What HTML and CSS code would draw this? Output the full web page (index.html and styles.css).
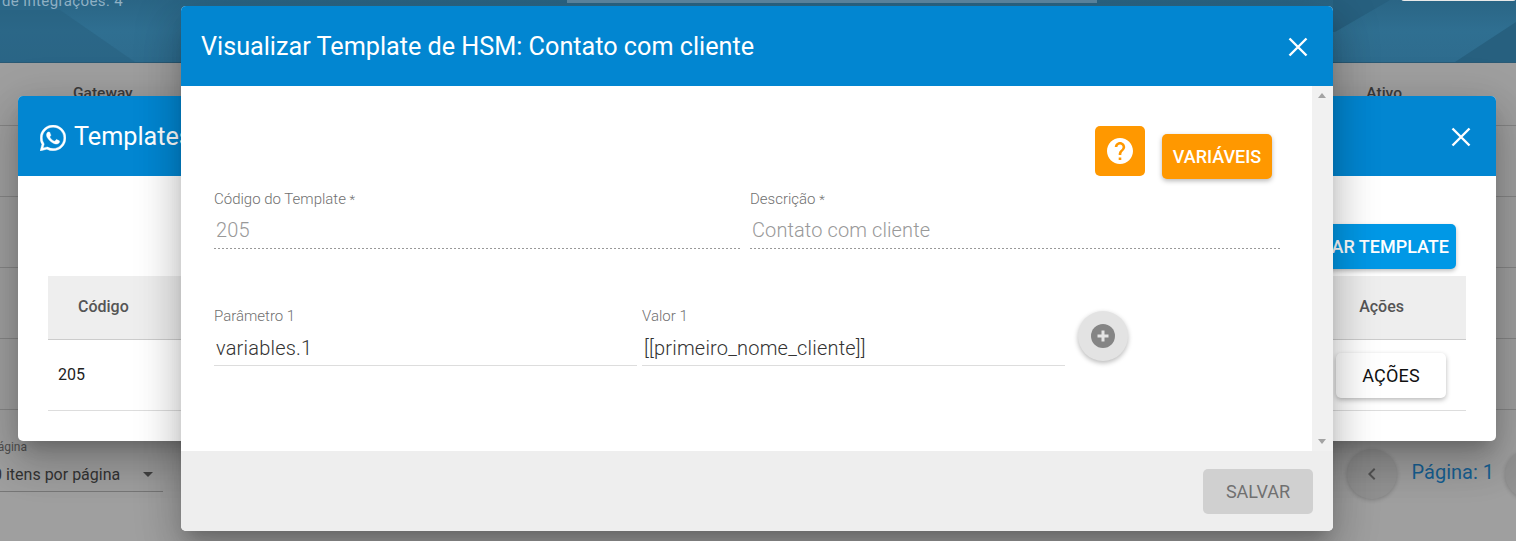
FILE: index.html
```html
<!DOCTYPE html>
<html lang="pt-BR">
<head>
<meta charset="utf-8">
<title>Visualizar Template de HSM</title>
<link rel="stylesheet" href="styles.css">
</head>
<body>
<div class="page">
  <header class="hero">
    <svg class="hero-art" width="1516" height="62" viewBox="0 0 1516 62">
      <path d="M60 10 L135 62 H0 V10 Z" fill="#28607f" opacity=".55"/>
      <path d="M1335 32 L1390 0 H1333 V32 Z" fill="#27607f"/>
      <path d="M1455 62 L1516 22 V62 Z" fill="#27607f"/>
    </svg>
    <span class="hero-count">de integrações: 4</span>
    <span class="hero-search"></span>
    <span class="hero-btn"></span>
  </header>
  <div class="bg-table">
    <div class="bg-head"><span>Gateway</span><span>Ativo</span></div>
    <div class="bg-row"></div>
    <div class="bg-row"></div>
    <div class="bg-row"></div>
    <div class="bg-row"></div>
  </div>
  <div class="bg-footer">
    <div class="per-page">
      <span class="per-label">Itens por página</span>
      <div class="per-select"><span>10 itens por página</span><i class="caret"></i></div>
    </div>
    <div class="pager">
      <span class="pager-btn"><svg width="24" height="24" viewBox="0 0 24 24"><path d="M15.4 7.4 14 6l-6 6 6 6 1.4-1.4L10.8 12z" fill="#555"/></svg></span>
      <span class="pager-text">Página: 1</span>
      <span class="pager-btn"></span>
    </div>
  </div>
</div>

<section class="modal modal-back">
  <div class="modal-head">
    <h2 class="modal-title">
      <svg class="wa" width="26" height="26" viewBox="0 0 24 24"><path fill="#fff" stroke="#fff" stroke-width=".35" d="M17.472 14.382c-.297-.149-1.758-.867-2.03-.967-.273-.099-.471-.148-.67.15-.197.297-.767.966-.94 1.164-.173.199-.347.223-.644.075-.297-.15-1.255-.463-2.39-1.475-.883-.788-1.48-1.761-1.653-2.059-.173-.297-.018-.458.13-.606.134-.133.298-.347.446-.52.149-.174.198-.298.298-.497.099-.198.05-.371-.025-.52-.075-.149-.669-1.612-.916-2.207-.242-.579-.487-.5-.669-.51-.173-.008-.371-.01-.57-.01-.198 0-.52.074-.792.372-.272.297-1.04 1.016-1.04 2.479 0 1.462 1.065 2.875 1.213 3.074.149.198 2.096 3.2 5.077 4.487.709.306 1.262.489 1.694.625.712.227 1.36.195 1.871.118.571-.085 1.758-.719 2.006-1.413.248-.694.248-1.289.173-1.413-.074-.124-.272-.198-.57-.347m-5.421 7.403h-.004a9.87 9.87 0 01-5.031-1.378l-.361-.214-3.741.982.998-3.648-.235-.374a9.86 9.86 0 01-1.51-5.26c.001-5.45 4.436-9.884 9.888-9.884 2.64 0 5.122 1.03 6.988 2.898a9.825 9.825 0 012.893 6.994c-.003 5.45-4.437 9.884-9.885 9.884m8.413-18.297A11.815 11.815 0 0012.05 0C5.495 0 .16 5.335.157 11.892c0 2.096.547 4.142 1.588 5.945L.057 24l6.305-1.654a11.882 11.882 0 005.683 1.448h.005c6.554 0 11.89-5.335 11.893-11.893a11.821 11.821 0 00-3.48-8.413z"/></svg>
      <span class="title-text">Templates de HSM</span>
    </h2>
    <button class="close" type="button" aria-label="Fechar"><svg width="20" height="20" viewBox="0 0 20 20"><path d="M1.500 1.500l17 17M18.500 1.500l-17 17" stroke="#fff" stroke-width="2.400" fill="none"/></svg></button>
  </div>
  <div class="back-body">
    <div class="back-actions"><button class="btn btn-blue" type="button">ADICIONAR TEMPLATE</button></div>
    <div class="tbl-head"><span class="col-code">Código</span><span class="col-act">Ações</span></div>
    <div class="tbl-row"><span class="col-value">205</span><button class="btn btn-white" type="button">AÇÕES</button></div>
  </div>
</section>

<section class="modal modal-front">
  <div class="modal-head">
    <h2 class="modal-title"><span class="title-text">Visualizar Template de HSM: Contato com cliente</span></h2>
    <button class="close" type="button" aria-label="Fechar"><svg width="20" height="20" viewBox="0 0 20 20"><path d="M1.500 1.500l17 17M18.500 1.500l-17 17" stroke="#fff" stroke-width="2.400" fill="none"/></svg></button>
  </div>
  <div class="front-body">
    <div class="front-scroll">
      <div class="tools">
        <button class="help" type="button" aria-label="Ajuda">
          <svg width="26" height="26" viewBox="2 2 20 20"><path fill="#fff" d="M12 2C6.480 2 2 6.480 2 12s4.480 10 10 10 10-4.480 10-10S17.520 2 12 2zm1 17h-2v-2h2v2zm2.070-7.750l-.9.920C13.450 12.900 13 13.500 13 15h-2v-.5c0-1.100.45-2.100 1.170-2.830l1.240-1.260c.37-.36.59-.86.59-1.410 0-1.100-.9-2-2-2s-2 .9-2 2H8c0-2.210 1.790-4 4-4s4 1.790 4 4c0 .88-.36 1.680-.93 2.250z"/></svg>
        </button>
        <button class="btn btn-orange" type="button">VARIÁVEIS</button>
      </div>
      <div class="row-disabled">
        <label class="field field-code"><span class="lbl">Código do Template <span class="req">*</span></span><span class="val val-off">205</span></label>
        <label class="field field-desc"><span class="lbl">Descrição <span class="req">*</span></span><span class="val val-off">Contato com cliente</span></label>
      </div>
      <div class="row-params">
        <label class="field field-param"><span class="lbl">Parâmetro 1</span><span class="val">variables.1</span></label>
        <label class="field field-param"><span class="lbl">Valor 1</span><span class="val">[[primeiro_nome_cliente]]</span></label>
        <button class="add" type="button" aria-label="Adicionar">
          <svg width="24" height="24" viewBox="0 0 24 24"><circle cx="12" cy="12" r="12" fill="#858585"/><path d="M12 6.500v11M6.500 12h11" stroke="#e4e4e4" stroke-width="3"/></svg>
        </button>
      </div>
    </div>
    <div class="scrollbar"><i class="arrow-up"></i><i class="arrow-down"></i></div>
  </div>
  <div class="front-foot"><button class="btn btn-off" type="button">SALVAR</button></div>
</section>
</body>
</html>
```
FILE: styles.css
```css
* { box-sizing: border-box; }
html, body { margin: 0; height: 541px; overflow: hidden; }
body { font-family: Roboto, "Liberation Sans", sans-serif; background: #9b9b9b; color: #222; position: relative; }
button { font-family: inherit; border: 0; }

.page { height: 541px; display: flex; flex-direction: column; background: #9f9f9f; }
.hero { position: relative; height: 63px; flex: none; overflow: hidden; background: linear-gradient(180deg, #2a6585 0%, #2f6f91 50%, #2e6c8e 100%); border-bottom: 1px solid #2a5a75; }
.hero-art { position: absolute; left: 0; top: 0; }
.hero-count { position: absolute; left: 2px; top: -7px; font-size: 15px; line-height: 17px; color: #8fb0c4; letter-spacing: .4px; }
.hero-search { position: absolute; left: 567px; top: 0; width: 530px; height: 3px; background: #5e8aa5; }
.hero-btn { position: absolute; left: 1401px; top: -3px; width: 115px; height: 4px; background: #e9e9e9; border-radius: 0 0 3px 3px; }

.bg-table { flex: none; }
.bg-head { height: 63px; display: flex; justify-content: space-between; padding: 21px 114px 0 73px; font-size: 15.5px; font-weight: 500; color: #3a3a3a; border-bottom: 1px solid #858585; }
.bg-row { height: 71px; border-bottom: 1px solid #858585; }
.bg-footer { flex: 1; position: relative; display: flex; justify-content: space-between; }
.per-page { width: 163px; margin-top: 30px; overflow: hidden; border-bottom: 1px solid #777; height: 52px; }
.per-label { display: block; margin-left: -79px; font-size: 12px; line-height: 14px; color: #4f4f4f; text-align: right; width: 106px; white-space: nowrap; }
.per-select { display: flex; align-items: center; justify-content: space-between; margin: 11px 10px 0 -16px; font-size: 16px; color: #333; }
.caret { width: 0; height: 0; border: 5px solid transparent; border-top: 5px solid #444; border-bottom: 0; }
.pager { display: flex; align-items: flex-start; padding-top: 39px; margin-right: -39px; }
.pager-btn { width: 50px; height: 50px; border-radius: 50%; background: #929292; box-shadow: 0 1px 4px rgba(0,0,0,.2); display: flex; align-items: center; justify-content: center; }
.pager-text { font-size: 20px; line-height: 24px; margin: 11px 11px 0 15px; color: #175f92; white-space: nowrap; }

.modal { position: absolute; overflow: hidden; border-radius: 5px; background: #fff; box-shadow: 0 11px 15px -7px rgba(0,0,0,.2), 0 24px 38px 3px rgba(0,0,0,.14), 0 9px 46px 8px rgba(0,0,0,.12); display: flex; flex-direction: column; }
.modal-back { left: 18px; top: 96px; width: 1478px; height: 345px; }
.modal-front { left: 181px; top: 6px; width: 1152px; height: 525px; }
.modal-head { height: 80px; flex: none; background: #0286d1; display: flex; align-items: center; justify-content: space-between; padding: 0 22px 0 20px; color: #fff; }
.modal-back .modal-head { padding-left: 22px; }
.modal-title { margin: 0; display: flex; align-items: center; gap: 8px; font-size: 25.2px; font-weight: 400; line-height: 28px; white-space: nowrap; }
.title-text { padding-top: 2px; }
.wa { margin-top: 3px; }
.close { width: 26px; height: 26px; padding: 3px; margin-top: 1px; background: none; display: flex; }

.btn { height: 45px; width: 110px; border-radius: 5px; font-size: 18px; font-weight: 500; padding: 0; white-space: nowrap; }
.btn-orange { background: #ff9800; color: #fff; box-shadow: 0 2px 5px rgba(0,0,0,.28); margin-top: 8px; }
.btn-blue { width: 208px; background: #0098e6; color: #fff; box-shadow: 0 2px 4px rgba(0,0,0,.25); text-align: right; padding-right: 7px; }
.btn-white { background: #fff; color: #111; font-weight: 400; letter-spacing: .2px; box-shadow: 0 2px 5px rgba(0,0,0,.28); }
.btn-off { background: #d0d0d0; color: #707070; font-weight: 400; }

.back-body { flex: 1; padding: 48px 30px 0; }
.back-actions { display: flex; justify-content: flex-end; height: 52px; margin-right: 10px; }
.tbl-head { height: 64px; background: #eee; display: flex; justify-content: space-between; align-items: center; padding: 0 62px 2px 30px; font-size: 16px; font-weight: 500; color: #555; border-bottom: 1px solid #ccc; }
.tbl-row { height: 71px; display: flex; justify-content: space-between; align-items: center; padding: 0 20px 0 10px; font-size: 16px; color: #222; border-bottom: 1px solid #ddd; }
.col-value { margin-bottom: 2px; }

.front-body { height: 365px; flex: none; display: flex; }
.front-scroll { flex: 1; min-width: 0; padding: 40px 0 0 33px; }
.scrollbar { width: 21px; background: #f1f1f1; position: relative; }
.arrow-up, .arrow-down { position: absolute; left: 6px; width: 0; height: 0; border: 4.500px solid transparent; }
.arrow-up { top: 7px; border-bottom: 5px solid #a3a3a3; border-top: 0; }
.arrow-down { bottom: 7px; border-top: 5px solid #a3a3a3; border-bottom: 0; }

.tools { display: flex; justify-content: flex-end; gap: 17px; height: 53px; margin-right: 40px; align-items: flex-start; }
.help { width: 50px; height: 50px; border-radius: 5px; background: #ff9800; display: flex; align-items: center; justify-content: center; padding: 0; }
.row-disabled { display: flex; gap: 8px; margin-top: 12px; }
.row-params { display: flex; gap: 5px; margin-top: 59px; align-items: flex-start; }
.field { display: flex; flex-direction: column; }
.field-code { width: 528px; }
.field-desc { width: 530px; }
.field-param { width: 423px; }
.lbl { font-size: 15px; line-height: 17px; color: #707070; font-weight: 300; white-space: nowrap; }
.req { font-size: 13px; }
.val { height: 41px; padding: 10px 2px 0; font-size: 20px; line-height: 24px; color: #333; font-weight: 300; letter-spacing: .1px; border-bottom: 1px solid #ddd; white-space: nowrap; }
.field-param .val { padding-top: 11px; letter-spacing: .2px; }
.val-off { color: #999; border-bottom: 0; background: repeating-linear-gradient(90deg, #999 0 2px, transparent 2px 4px) left bottom / 100% 1px no-repeat; }
.add { width: 50px; height: 50px; border-radius: 50%; background: #e3e3e3; box-shadow: 0 2px 5px rgba(0,0,0,.28); display: flex; align-items: center; justify-content: center; padding: 0; margin: 3px 0 0 8px; }

.front-foot { flex: 1; background: #eee; display: flex; justify-content: flex-end; align-items: flex-start; padding: 18px 20px 0 0; }
```
